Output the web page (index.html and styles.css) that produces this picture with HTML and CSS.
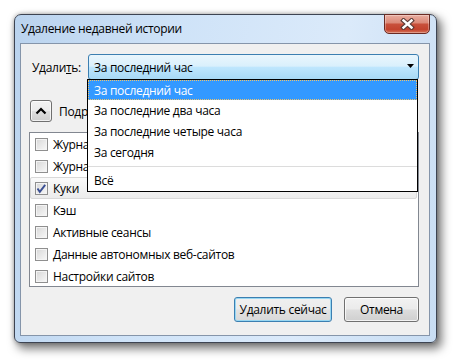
FILE: index.html
```html
<!DOCTYPE html>
<html lang="ru">
<head>
<meta charset="utf-8">
<title>Удаление недавней истории</title>
<link rel="stylesheet" href="styles.css">
</head>
<body>
<div class="window">
  <div class="titlebar">
    <span class="title">Удаление недавней истории</span>
    <div class="close">
      <svg width="15" height="12" viewBox="0 0 15 12">
        <path d="M3.5 2.5 L11.5 9.5 M11.5 2.5 L3.5 9.5" stroke="#5b3a36" stroke-width="4.6" stroke-linecap="square" fill="none"/>
        <path d="M3.5 2.5 L11.5 9.5 M11.5 2.5 L3.5 9.5" stroke="#ffffff" stroke-width="2.4" stroke-linecap="square" fill="none"/>
      </svg>
    </div>
  </div>
  <div class="client">
    <div class="range-row">
      <span class="label">Удали<u>т</u>ь:</span>
      <div class="combo">
        <span>За последний час</span>
        <svg class="arrow" width="7" height="4" viewBox="0 0 7 4"><path d="M0 0 H7 L3.5 4 Z" fill="#000"/></svg>
      </div>
    </div>
    <div class="details-row">
      <div class="toggle">
        <svg width="20" height="20" viewBox="0 0 20 20"><path d="M5.5 12.5 L10 8 L14.5 12.5" stroke="#000" stroke-width="2.2" fill="none"/></svg>
      </div>
      <span class="details-label">Подробности</span>
    </div>
    <div class="listbox">
      <div class="item"><span class="cb"></span><span>Журнал посещений и загрузок</span></div>
      <div class="item"><span class="cb"></span><span>Журнал форм и поиска</span></div>
      <div class="item item-current"><span class="cb cb-checked"><svg width="11" height="11" viewBox="0 0 11 11"><path d="M1.5 5.5 L3.8 8.8 L9.2 1.8" stroke="#3a4f93" stroke-width="1.9" fill="none"/></svg></span><span>Куки</span></div>
      <div class="item"><span class="cb"></span><span>Кэш</span></div>
      <div class="item"><span class="cb"></span><span>Активные сеансы</span></div>
      <div class="item"><span class="cb"></span><span>Данные автономных веб-сайтов</span></div>
      <div class="item"><span class="cb"></span><span>Настройки сайтов</span></div>
    </div>
    <div class="buttons">
      <div class="btn btn-default">Удалить сейчас</div>
      <div class="btn">Отмена</div>
    </div>
    <div class="dropdown">
      <div class="opt opt-selected">За последний час</div>
      <div class="opt">За последние два часа</div>
      <div class="opt">За последние четыре часа</div>
      <div class="opt">За сегодня</div>
      <div class="sep"></div>
      <div class="opt">Всё</div>
    </div>
  </div>
</div>
</body>
</html>
```
FILE: styles.css
```css
* { box-sizing: border-box; }
html, body { margin: 0; background: #ffffff; }
body {
  width: 455px;
  height: 362px;
  overflow: hidden;
  padding: 14px 0 0 14px;
  font-family: "Open Sans", "Noto Sans", sans-serif;
  font-size: 12px;
  letter-spacing: -0.3px;
  color: #000;
}
.window {
  width: 423px;
  height: 329px;
  border: 1px solid #3d4452;
  border-radius: 7px 7px 6px 6px;
  background: linear-gradient(100deg, #bad3ee 0%, #cfe3f8 35%, #dbeafa 70%, #c8ddf3 100%);
  box-shadow: 4px 5px 10px 1px rgba(0,0,0,.5), 0 0 4px rgba(0,0,0,.3);
  display: flex;
  flex-direction: column;
  padding: 0 6px 6px 5px;
}
.titlebar {
  height: 28px;
  flex-shrink: 0;
  display: flex;
  align-items: flex-start;
}
.title {
  padding: 6px 0 0 1px;
  line-height: 16px;
  color: #000;
}
.close {
  margin-left: auto;
  margin-top: -1px;
  width: 46px;
  height: 20px;
  border: 1px solid #6a2a23;
  border-radius: 0 0 5px 5px;
  background: linear-gradient(#e9ada0 0%, #dc8a79 42%, #c8503b 52%, #c3432e 80%, #d67358 100%);
  box-shadow: inset 0 0 0 1px rgba(255,255,255,.3);
  display: flex;
  align-items: center;
  justify-content: center;
}
.client {
  flex: 1;
  border: 1px solid #8595aa;
  background: #f0f0f0;
  position: relative;
  display: flex;
  flex-direction: column;
}
.range-row {
  display: flex;
  align-items: center;
  margin: 10px 10px 0 11px;
}
.label u { text-decoration: underline; }
.combo {
  margin-left: auto;
  width: 331px;
  height: 26px;
  border: 1px solid #3c7fb1;
  border-radius: 3px;
  background: linear-gradient(#eaf6fd 0%, #d9f0fc 46%, #bee6fd 52%, #a7d9f5 100%);
  display: flex;
  align-items: center;
  padding: 0 4px 0 5px;
}
.arrow { margin-left: auto; margin-top: -2px; }
.details-row {
  display: flex;
  align-items: center;
  margin: 20px 0 0 9px;
  gap: 7px;
}
.toggle {
  width: 22px;
  height: 22px;
  border: 1px solid #707070;
  border-radius: 3px;
  background: linear-gradient(#f2f2f2 0%, #ebebeb 48%, #dddddd 52%, #cfcfcf 100%);
  box-shadow: inset 0 0 0 1px rgba(255,255,255,.7);
  display: flex;
  align-items: center;
  justify-content: center;
}
.listbox {
  margin: 10px 0 0 8px;
  width: 390px;
  height: 155px;
  border: 1px solid #828790;
  background: #fff;
}
.item {
  height: 22px;
  display: flex;
  align-items: center;
  gap: 5px;
  padding-left: 5px;
  margin-right: 1px;
}
.item-current {
  border: 1px solid #d9d9d9;
  border-radius: 2px;
  background: linear-gradient(#fafafa, #ececec);
  padding-left: 4px;
}
.cb {
  width: 13px;
  height: 13px;
  border: 1px solid #8f8f8f;
  background: linear-gradient(135deg, #d6d6d6 0%, #e8e8e8 50%, #f8f8f8 100%);
  box-shadow: inset 0 0 0 1px #f4f4f4;
  display: flex;
  align-items: center;
  justify-content: center;
  flex-shrink: 0;
}
.buttons {
  display: flex;
  gap: 12px;
  margin: 10px 10px 0 auto;
}
.btn {
  width: 75px;
  height: 25px;
  border: 1px solid #707070;
  border-radius: 3px;
  background: linear-gradient(#f2f2f2 0%, #ebebeb 48%, #dddddd 52%, #cfcfcf 100%);
  box-shadow: inset 0 0 0 1px rgba(255,255,255,.75);
  display: flex;
  align-items: center;
  justify-content: center;
}
.btn-default {
  width: 98px;
  border-color: #3c7fb1;
  box-shadow: inset 0 0 0 1px #98d7f2;
  background: linear-gradient(#f0f0f0 0%, #ebebeb 48%, #e2e2e2 52%, #d8d8d8 100%);
}
.dropdown {
  position: absolute;
  left: 66px;
  top: 35px;
  width: 331px;
  height: 113px;
  border: 1px solid #000;
  background: #fff;
  z-index: 5;
}
.opt {
  height: 21px;
  display: flex;
  align-items: center;
  padding-left: 6px;
}
.opt-selected {
  background: #3399ff;
  color: #fff;
  border: 1px dotted #f0c36a;
  padding-left: 5px;
  height: 20px;
}
.sep {
  height: 7px;
  display: flex;
  align-items: center;
}
.sep::before {
  content: "";
  flex: 1;
  height: 1px;
  background: #dcdcdc;
}
```
